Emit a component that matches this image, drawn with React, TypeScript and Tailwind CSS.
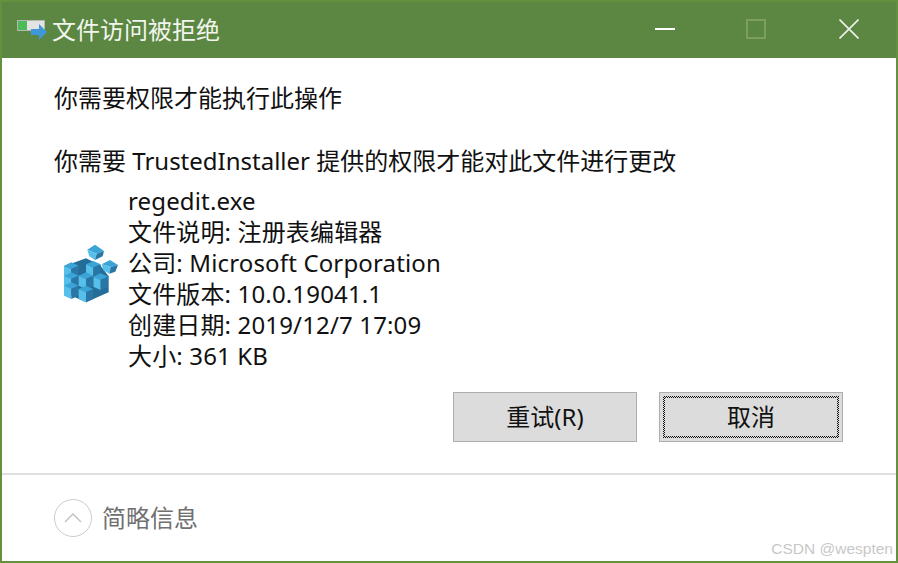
const font = "[font-family:'Noto_Sans','Noto_Sans_CJK_SC',sans-serif]"

function AppIcon() {
	return (
		<svg width="32" height="24" viewBox="0 0 32 24" className="shrink-0">
			<rect x="0.5" y="2.5" width="27" height="10" fill="#e3e3e3" stroke="#b5b8b0" strokeWidth="1" />
			<rect x="1" y="3" width="9" height="9" fill="#4cbb5a" />
			<polygon points="14,11 22,11 22,6 30,14 22,22 22,17 14,17" fill="#3f97d8" />
		</svg>
	)
}

function RegistryIcon() {
	const dark = "#2a77a6"
	const mid = "#3ba4d6"
	const light = "#56c0ea"
	// one cube in the 3x units of the icon: top, left and right face
	const cube = (x: number, y: number) => (
		<g key={`${x}-${y}`}>
			<polygon points={`${x - 22},${y + 10} ${x},${y} ${x + 22},${y + 10} ${x},${y + 20}`} fill={mid} />
			<polygon points={`${x - 22},${y + 10} ${x},${y + 20} ${x},${y + 50} ${x - 22},${y + 40}`} fill={light} />
			<polygon points={`${x + 22},${y + 10} ${x},${y + 20} ${x},${y + 50} ${x + 22},${y + 40}`} fill={dark} />
		</g>
	)
	return (
		<svg width="80" height="90" viewBox="0 0 240 270" className="shrink-0">
			<polygon points="42,112 108,88 150,108 176,142 176,190 108,220 42,190" fill="#256d99" />
			{cube(64, 100)}
			{cube(64, 130)}
			{cube(64, 160)}
			{cube(130, 96)}
			{cube(152, 133)}
			{cube(108, 130)}
			{cube(108, 170)}
			<polygon points="112,62 135,47 162,66 140,74" fill={mid} />
			<polygon points="112,62 140,74 135,93 118,82" fill={light} />
			<polygon points="162,66 140,74 135,93 158,82" fill={dark} />
			<polygon points="155,106 180,93 204,108 182,114" fill={mid} />
			<polygon points="155,106 182,114 178,134 160,124" fill={light} />
			<polygon points="204,108 182,114 178,134 196,128" fill={dark} />
		</svg>
	)
}

export default function App() {
	const details = [
		"regedit.exe",
		"文件说明: 注册表编辑器",
		"公司: Microsoft Corporation",
		"文件版本: 10.0.19041.1",
		"创建日期: 2019/12/7 17:09",
		"大小: 361 KB",
	]

	return (
		<div className={`${font} w-[898px] h-[563px] flex flex-col bg-white border-2 border-t-0 border-[#64913f] text-[#111] overflow-hidden`}>
			<div className="h-[58px] shrink-0 bg-[#5c8742] border-t-2 border-[#65903f] flex items-center pl-[15px] text-white">
				<AppIcon />
				<span className="ml-[3px] text-[24px] leading-none text-[#f2f5ee]">文件访问被拒绝</span>
				<div className="ml-auto flex items-center pr-[37px] -mt-[2px]">
					<div className="w-5 h-0.5 bg-white mr-[71px]" />
					<div className="w-5 h-5 border-2 border-[#7c9f5e] mr-[73px]" />
					<svg width="20" height="20" viewBox="0 0 20 20">
						<path d="M0.5 0.5 L19.5 19.5 M19.5 0.5 L0.5 19.5" stroke="#eef2ea" strokeWidth="1.6" fill="none" />
					</svg>
				</div>
			</div>

			<div className="flex-1 flex flex-col pl-[52px] pr-[53px] pt-[22px]">
				<p className="text-[24px] leading-[36px]">你需要权限才能执行此操作</p>
				<p className="text-[24px] leading-[36px] mt-[27px]">你需要 TrustedInstaller 提供的权限才能对此文件进行更改</p>
				<div className="flex items-center mt-[6px]">
					<div className="w-[74px] shrink-0 -ml-[4px] mr-[4px] mb-[8px]">
						<RegistryIcon />
					</div>
					<div className="text-[24px] leading-[31px] tracking-[0.15px]">
						{details.map((line) => (
							<div key={line}>{line}</div>
						))}
					</div>
				</div>
				<div className="flex justify-end gap-[22px] mt-[21px]">
					<button className="w-[184px] h-[50px] bg-[#dcdcdc] border-[1.5px] border-[#adadad] text-[24px]">重试(R)</button>
					<button className="w-[184px] h-[50px] bg-[#dcdcdc] border-[1.5px] border-[#adadad] text-[24px] p-[3px]">
						<div className="w-full h-full p-[2px] bg-[repeating-conic-gradient(#111_0%_25%,#ddd_0%_50%)] bg-[length:2px_2px]">
							<div className="w-full h-full bg-[#dcdcdc] flex items-center justify-center">取消</div>
						</div>
					</button>
				</div>
			</div>

			<div className="h-[88px] shrink-0 border-t-2 border-[#dfdfdf] flex items-center pl-[52px] relative">
				<div className="w-[38px] h-[38px] rounded-full border border-[#cccccc] flex items-center justify-center">
					<svg width="18" height="10" viewBox="0 0 18 10">
						<path d="M1 9 L9 1 L17 9" stroke="#c4c4c4" strokeWidth="1.5" fill="none" />
					</svg>
				</div>
				<span className="ml-[10px] text-[24px] text-[#707070]">简略信息</span>
				<span className="absolute right-[3px] bottom-[3px] text-[15.5px] leading-[18px] text-[#c8c8c8] [font-family:'Liberation_Sans',sans-serif]">CSDN @wespten</span>
			</div>
		</div>
	)
}
